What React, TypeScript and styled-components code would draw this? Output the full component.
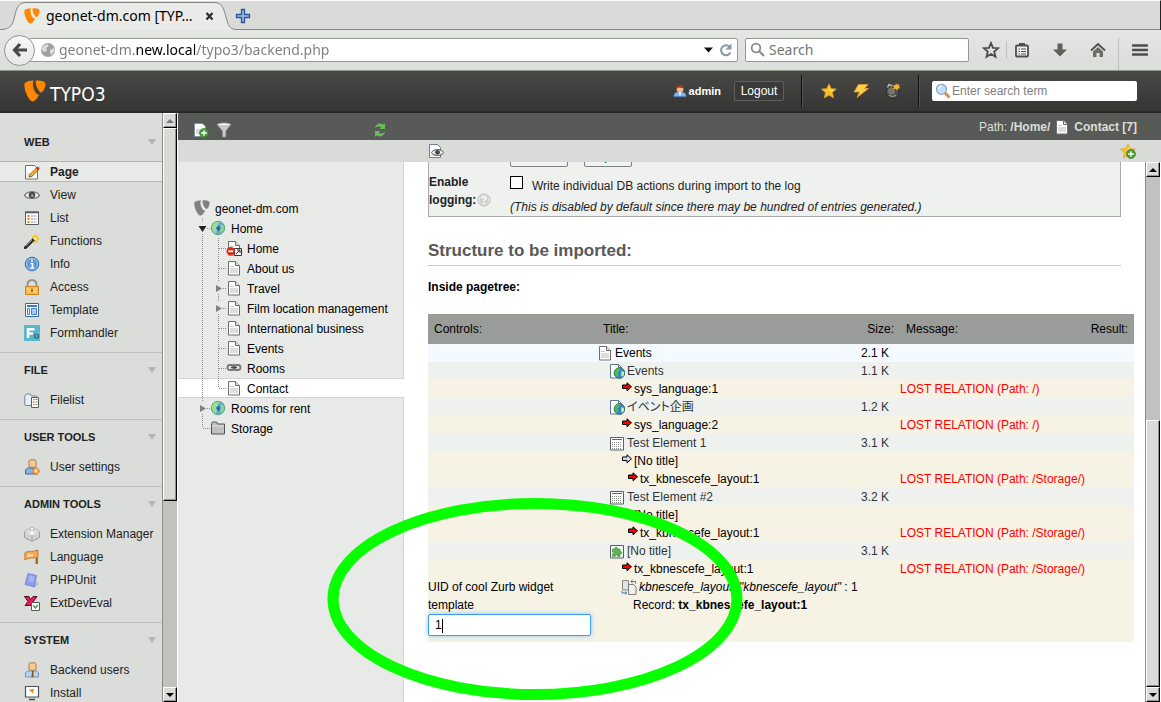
import React from "react";
import styled, { createGlobalStyle, css } from "styled-components";

const UI = `"Liberation Sans", Arial, "Noto Sans CJK JP", sans-serif`;
const CHROME = `"Noto Sans", "DejaVu Sans", sans-serif`;

const Global = createGlobalStyle`
  *, *::before, *::after { box-sizing: border-box; }
  body { margin: 0; font: 12px/18px ${UI}; color: #000; background: #fff; }
  ul { list-style: none; margin: 0; padding: 0; }
  h1, h2, h3, p { margin: 0; }
  a { color: inherit; text-decoration: none; }
  button, input { font-family: inherit; margin: 0; }
  button { padding: 0; border: 0; background: none; cursor: pointer; }
  svg { display: block; flex: none; }
`;

/* ---------- icons ---------- */

type Box = { size?: number; children: React.ReactNode };
const Svg = ({ size = 16, children }: Box) => (
  <svg width={size} height={size} viewBox="0 0 16 16" aria-hidden="true">{children}</svg>
);

const Shield = ({ color, size = 16 }: { color: string; size?: number }) => (
  <svg width={size} height={size} viewBox="0 0 22 22" aria-hidden="true">
    <path fill={color} d="M10 0.5C8.7 1.7 8.5 4 9.3 7.200c.9 3.700 3.400 7.300 5 7.300.4 0 .8-.1 1.200-.2-1.900 3.700-4.700 7.200-6.900 7.200C5.300 21.500.4 11.500.4 5.300c0-1.500.3-2.300.9-2.800C3.200 1.300 6.500.7 10 .5z" />
    <path fill={color} d="M12.500.4c4.600-.1 8.900.7 8.900 3.400 0 4.200-2.500 8.600-4.200 8.600-2.400 0-5.500-6.800-5.500-10.200 0-1.200.2-1.700.8-1.800z" />
  </svg>
);

const PageShape = () => (
  <>
    <path d="M2.500 1.500h7l4 4v9.500h-11z" fill="#fdfdfd" stroke="#6b6d6a" />
    <path d="M9.500 1.500v4h4" fill="#e4e6e3" stroke="#6b6d6a" />
    <path d="M4 8h8v5H4z" fill="#dcdedb" />
    <path d="M4 6.500h4" stroke="#c8cac7" />
  </>
);
const PlusBadge = () => (
  <>
    <circle cx="11" cy="11" r="4.500" fill="#4d9a3c" stroke="#2f7a2a" strokeWidth=".6" />
    <path d="M11 8.200v5.600M8.200 11h5.600" stroke="#fff" strokeWidth="1.400" />
  </>
);
const EyeShape = () => (
  <>
    <path d="M.5 8.500C3 3.500 13 3.500 15.500 8.500 13 12.500 3 12.500.5 8.500z" fill="#eceeeb" stroke="#6a6b69" strokeWidth="1.200" />
    <circle cx="8" cy="8" r="3.300" fill="#4a4b49" />
    <circle cx="8.300" cy="8.600" r="1.300" fill="#a5a6a4" />
  </>
);
const GlobeShape = () => (
  <>
    <circle cx="8" cy="8" r="6.700" fill="#62a8dc" stroke="#5aa873" />
    <path d="M2 6C3.500 2 7 1.500 10 2.200L8 4l.5 1.500L6 7l1 2.500-1 4C3 12.500 1.500 9.500 2 6z" fill="#9ade94" />
    <path d="M11 4l2.800 2v4.500l-2.800 2.500-1-3 1.500-2-1.500-2z" fill="#8ed88a" />
    <path d="M6 8l3.500-3 .5 4.500-1.500 2z" fill="#2d63b4" />
  </>
);
const BadgeGlobe = () => (
  <>
    <circle cx="10.500" cy="10" r="5.300" fill="#3f7fd0" stroke="#2f7f49" />
    <path d="M6 8c1-2 3-3 5-2.500l-1 2.500-1.500 1.500 1 2-1 2.500C6 13 5.500 10 6 8z" fill="#4cc04f" />
    <path d="M12.500 8l2.500 1v3l-2 2-1-2z" fill="#b8f0b0" />
  </>
);
const Star = () => (
  <>
    <path d="M8 .8l2.200 4.800 5.200.5-4 3.500 1.300 5.400L8 12.300 3.200 15l1.200-5.300-4-3.600 5.400-.5z" fill="#fac02c" stroke="#d99a1c" strokeWidth=".6" />
    <path d="M8 2.500l1.400 3.800 3.800.4-3.200 2L8 6z" fill="#ffdf5e" />
  </>
);
const Head = () => <rect x="5" y=".8" width="7" height="7.500" rx="1.500" fill="#f6cb94" stroke="#aa7a45" />;

const art: Record<string, React.ReactNode> = {
  page: <PageShape />,
  pageEdit: (
    <>
      <path d="M1.500 1.500h9l3 3v10.500h-12z" fill="#fdfdfd" stroke="#66708a" />
      <path d="M3 9h6v4H3z" fill="#dcdedb" />
      <path d="M5.200 13.200l1-3 6.500-6.500 2 2-6.500 6.500z" fill="#f5b82e" stroke="#6a4a16" strokeWidth=".8" />
      <path d="M12 4.400l2-1.900 1.700 1.800-1.800 2z" fill="#cf2b26" />
    </>
  ),
  eye: <EyeShape />,
  list: (
    <>
      <path d="M1.500 2h13v12.500h-13z" fill="#fff" stroke="#585a60" />
      <path d="M1 1.500h14v1.800H1z" fill="#585f72" />
      <path d="M3.500 5h2v2h-2zM3.500 8h2v2h-2zM3.500 11h2v2h-2z" fill="#f08220" />
      <path d="M7 6h6M7 9h6M7 12h6" stroke="#8d8f92" strokeDasharray="2 .7" />
    </>
  ),
  wand: (
    <>
      <path d="M11 0l1 3 3-1.500-1.400 3L16 6l-2.800 1 1.400 3L12 8.700 10.500 11 9.600 8 7 7.500 9 5.500 7.300 2.500 10 3.500z" fill="#f7c331" />
      <path d="M1.300 14.700l8-8" stroke="#2c2c2c" strokeWidth="3" strokeLinecap="round" />
      <path d="M2 13l6-6" stroke="#909090" />
      <circle cx="11" cy="5.500" r="1.600" fill="#fff0a0" />
    </>
  ),
  info: (
    <>
      <circle cx="8" cy="8" r="6.800" fill="#5f98d8" stroke="#3a6ca8" />
      <circle cx="8" cy="8" r="5.600" fill="none" stroke="#b5d3f0" strokeWidth=".8" />
      <path d="M8 3.600v1.900M6.500 7.500H8.500v4M6.400 11.700h3.800" stroke="#fff" strokeWidth="1.600" fill="none" />
    </>
  ),
  lock: (
    <>
      <path d="M3.500 8V5.500a4.500 4.500 0 0 1 9 0V8" fill="none" stroke="#8f918e" strokeWidth="2" />
      <path d="M1.500 7.500h13v8h-13z" fill="#f8b94f" stroke="#cf8320" />
      <path d="M3 10h10M3 12.500h10" stroke="#ffdc94" />
      <path d="M7.200 9.500h1.600v3.500H7.200z" fill="#9c5a10" />
    </>
  ),
  template: (
    <>
      <path d="M1.500 1.500h13v13h-13z" fill="#fff" stroke="#3468a8" />
      <path d="M3 3h10v2H3z" fill="#3f7bc4" />
      <path d="M3.500 6.500h2v6h-2z" fill="#fff" stroke="#4a80c0" />
      <path d="M7.500 6.500h5v6h-5z" fill="#a9caee" stroke="#4a80c0" />
    </>
  ),
  form: (
    <>
      <path d="M0 0h16v16H0z" fill="#5bb8cc" />
      <path d="M4 13V4.200h6.500M4 8.500h5" stroke="#fff" strokeWidth="2.400" fill="none" />
      <circle cx="12.500" cy="11" r="2" fill="none" stroke="#2b6674" strokeWidth="1.200" />
    </>
  ),
  filelist: (
    <>
      <path d="M.8 13V4l1.500-2h4l1.200 2h5v9.500h-11z" fill="#e6eef8" stroke="#7c838c" />
      <path d="M7.500 5.500h7v10h-7z" fill="#fff" stroke="#5d5f62" />
      <path d="M9 7.500h1.500M9 10h1.500M9 12.500h1.500" stroke="#f08220" strokeWidth="1.500" />
      <path d="M11.500 7.500h2M11.500 10h2M11.500 12.500h2" stroke="#5a9a5a" />
    </>
  ),
  userSettings: (
    <>
      <path d="M1.500 15V11l2-2h8l2 2v4z" fill="#8cb2e0" stroke="#3f6aa3" />
      <Head />
      <circle cx="12" cy="12" r="3" fill="#ffb650" stroke="#f07c13" strokeWidth="1.400" strokeDasharray="1.600 .8" />
      <circle cx="12" cy="12" r="1" fill="#fff" />
    </>
  ),
  brick: (
    <>
      <path d="M.5 5.500L8 2l7.500 3.500v6L8 15.300.5 11.500z" fill="#d2d4d2" stroke="#8f918e" strokeWidth=".8" />
      <path d="M.5 5.500L8 9l7.500-3.500L8 2z" fill="#f6f7f6" />
      <path d="M8 9v6" stroke="#a0a2a0" />
      <ellipse cx="8" cy="2.800" rx="2" ry="1.500" fill="#fff" stroke="#a8aaa7" strokeWidth=".8" />
      <ellipse cx="4.500" cy="5" rx="2" ry="1.300" fill="#fff" stroke="#a8aaa7" strokeWidth=".8" />
      <ellipse cx="11.500" cy="5" rx="2" ry="1.300" fill="#fff" stroke="#a8aaa7" strokeWidth=".8" />
    </>
  ),
  flag: (
    <>
      <path d="M11.500 1h2.500v14h-2.500z" fill="#a8682a" />
      <path d="M.8 4C4 .8 7 4 14 1v7.500C8.500 9.500 6 8 .8 11z" fill="#f6a650" stroke="#c97020" strokeWidth=".8" />
      <path d="M3 5.500c2-1 4 0 6-.5v2.500c-2 .5-4 0-6 1z" fill="#ffd29c" />
    </>
  ),
  unit: (
    <>
      <path d="M13 9l2 3-4 3z" fill="#b9bbba" />
      <path d="M4 1.500l8.500 2L10.500 15 1 12.500z" fill="#8d9bee" stroke="#7280d2" strokeWidth=".8" />
      <path d="M5.500 3.500l5 1.200-1.300 5.800-5-1.500z" fill="#a9b4f6" />
    </>
  ),
  devEval: (
    <>
      <path d="M.5 1.500h4.500l1.500 3L9 1.500h4L6.500 10.500H1l3-4z" fill="#e8195c" stroke="#3a0616" strokeWidth=".9" />
      <path d="M7.500 7.500h8v8h-8z" fill="#fff" stroke="#5b5d5a" />
      <path d="M9.300 10.500l2.200 2.500 2.300-3" fill="none" stroke="#3d9636" strokeWidth="1.400" />
    </>
  ),
  backendUser: (
    <>
      <path d="M1.500 15V11l2-2h9l2 2v4z" fill="#bdd2f0" stroke="#6f93c6" />
      <Head />
      <path d="M8 9h1.500v6H7.500z" fill="#8a5320" />
    </>
  ),
  install: (
    <>
      <path d="M1.500 1.500h13v10.500h-13z" fill="#fff" stroke="#4e5052" strokeWidth="1.200" />
      <path d="M5 14.500h6" stroke="#4e5052" strokeWidth="1.600" />
      <path d="M5 5l5-1.300L8.800 8.500 7.500 7z" fill="#f08220" />
    </>
  ),
  admin: (
    <>
      <path d="M1 14.500c0-4 2-5 4-5.500h6c2 .5 4 1.500 4 5.500z" fill="#86b4e8" stroke="#4275b3" strokeWidth=".8" />
      <circle cx="8" cy="5.500" r="4" fill="#f2b88a" />
      <path d="M3.500 6C3 1 6 .8 8.500.8S13 2 12.500 6L11 4.500 6 4z" fill="#8c3d16" />
      <path d="M6.500 9.500L8 14l1.500-4.500z" fill="#fff" />
    </>
  ),
  star: <Star />,
  starAdd: <><Star /><PlusBadge /></>,
  bolt: <path d="M5.500 1.500H15L11.500 5.500h4L4 14.500l2.500-5.500H1z" fill="#fcd04a" stroke="#e09a28" strokeWidth=".8" />,
  bomb: (
    <>
      <circle cx="7.500" cy="9" r="6.500" fill="#4d4f4d" stroke="#242524" strokeWidth=".8" />
      <circle cx="6.500" cy="8" r="3.500" fill="#747674" />
      <path d="M4 12a5 5 0 0 0 7 0" stroke="#8d8f8d" strokeWidth="1.200" fill="none" />
      <path d="M2.500 4.500L4 1.500 7.500 3" fill="none" stroke="#b5b7a5" strokeWidth="1.600" />
      <path d="M11 0l1 1.800 2.700-.5-.8 2.100 1.600 1.800-2.500.3-.8 2-1.600-1.700-2.500.4 1-2-1-2.200 2.300.2z" fill="#f7b52c" />
    </>
  ),
  lens: (
    <>
      <path d="M9.500 9.500l5 5" stroke="#d28d4e" strokeWidth="2.800" />
      <circle cx="6.500" cy="6.300" r="5" fill="#bfe0f8" stroke="#8ba7c6" strokeWidth="1.300" />
      <path d="M3.500 6a3 3 0 0 1 3-3" stroke="#fff" strokeWidth="1.200" fill="none" />
    </>
  ),
  newPage: <><path d="M1.500 1.500h8l3 3v10h-11z" fill="#fdfdfd" stroke="#8090a8" /><path d="M3 7h7v5H3z" fill="#d8dad7" /><PlusBadge /></>,
  filter: (
    <>
      <path d="M1 2.500h14L9.800 9v6H6.500V9z" fill="#c9cbc8" stroke="#8f918e" strokeWidth=".6" />
      <ellipse cx="8" cy="2.500" rx="6.500" ry="1.500" fill="#f5f6f5" stroke="#a5a7a4" strokeWidth=".6" />
    </>
  ),
  refresh: (
    <>
      <path d="M3 6C3.500 2.500 8 .2 11.500 2.500L13 1v6H7.500l1.800-1.800C7.500 4 5 4.500 3 6z" fill="#6cb85a" />
      <path d="M13 10c-.5 3.500-5 5.800-8.500 3.500L3 15V9h5.500l-1.800 1.800c1.800 1.200 4.300.7 6.300-.8z" fill="#6cb85a" />
    </>
  ),
  viewPage: (
    <>
      <path d="M1.500 1.500h8l3 3v10h-11z" fill="#fdfdfd" stroke="#6f7f99" />
      <path d="M3 11h7v2H3z" fill="#d8dad7" />
      <path d="M3.500 9.500c2-4 10-4 12 0-2 4-10 4-12 0z" fill="#e9ebe8" stroke="#555754" />
      <circle cx="9.500" cy="9.300" r="2.400" fill="#454644" />
    </>
  ),
  globe: <GlobeShape />,
  shortcut: (
    <>
      <PageShape />
      <path d="M8.500 8.500h7v7h-7z" fill="#fff" stroke="#333" />
      <path d="M10 14l3.800-3.800M11 10h3v3" stroke="#222" fill="none" />
      <circle cx="4.700" cy="11.300" r="4.200" fill="#e02b14" />
      <path d="M2.300 11.300h4.800" stroke="#fff" strokeWidth="1.800" />
    </>
  ),
  chain: (
    <>
      <rect x="1.500" y="5" width="7" height="5" rx="2.500" fill="none" stroke="#777977" strokeWidth="1.800" />
      <rect x="7.500" y="5" width="7" height="5" rx="2.500" fill="none" stroke="#777977" strokeWidth="1.800" />
      <path d="M5 7.500h6" stroke="#444" strokeWidth="1.600" />
    </>
  ),
  folder: (
    <>
      <path d="M1.500 14V3.500l1-1.500h4l1 2h7v10z" fill="#c0c2bf" stroke="#50524f" />
      <path d="M2 6h12" stroke="#e0e2df" />
    </>
  ),
  pageGlobe: <><path d="M1.500 1.500h8l3 3v10.500h-11z" fill="#fdfdfd" stroke="#66788f" /><path d="M9.500 1.500v3h3" fill="none" stroke="#66788f" /><BadgeGlobe /></>,
  grid: (
    <>
      <path d="M1.500 2.500h13v12.500h-13z" fill="#fff" stroke="#5d5f5c" />
      <path d="M3 4.500h10" stroke="#666" />
      <path d="M3 7.500h10M3 9.500h10M3 11.500h10M3 13.500h10" stroke="#8a8c89" strokeDasharray="1 1" />
    </>
  ),
  plugin: (
    <>
      <path d="M1.500 2.500h13v12.500h-13z" fill="#f4faf3" stroke="#5d5f5c" />
      <path d="M3.500 6H6c-.8-2.500 3-2.500 2.200 0H11v2.500c2.500-.8 2.500 3 0 2.200V13.500H8.500c.6-2-2.800-2-2.200 0H3.500V10.800c1.600.5 1.600-2.600 0-2z" fill="#5cb553" stroke="#3a8a35" strokeWidth=".6" />
    </>
  ),
  softref: (
    <>
      <path d="M1.500 1.500h6v9.500h-6z" fill="#e1e3e0" stroke="#858784" />
      <path d="M7.500 5.500h5l2.500 2.500v7.500H7.500z" fill="#f0f1ef" stroke="#7c7e7b" />
      <path d="M10 2.500h4.500v2M11.500 1l-1.700 1.500L11.500 4M5.500 14H1v-2M4 12.500L5.700 14 4 15.500" fill="none" stroke="#3d76b8" />
    </>
  ),
  help: (
    <>
      <circle cx="8" cy="8" r="6" fill="#cfd1ce" stroke="#b4b6b3" />
      <circle cx="8" cy="8" r="5" fill="none" stroke="#eceeec" />
      <path d="M6 6.700C6 4.300 10 4.500 9.800 6.700c-.1 1.200-1.800 1.300-1.800 2.600M8 10.500V12" stroke="#fff" strokeWidth="1.500" fill="none" />
    </>
  ),
};
const Icon = ({ name, size }: { name: string; size?: number }) => <Svg size={size}>{art[name]}</Svg>;

const Arrow = ({ fill }: { fill: string }) => (
  <svg width="11" height="10" viewBox="0 0 11 10" aria-hidden="true">
    <path d="M1.500 3H6V.8L10.500 4.800 6 8.800V6.500H1.500z" fill={fill} stroke="#000" />
  </svg>
);

/* ---------- browser chrome ---------- */

const Page = styled.div`
  display: flex;
  flex-direction: column;
  height: 100vh;
  overflow: hidden;
`;
const TabStrip = styled.div`
  display: flex;
  align-items: center;
  height: 30px;
  background: #d9dbd8;
  border-top: 1px solid #fcfdfc;
  border-right: 1px solid #222;
  box-shadow: inset 0 -1px #84867f;
  font: 14px/20px ${CHROME};
`;
const Tab = styled.div`
  position: relative;
  display: flex;
  align-items: center;
  width: 235px;
  height: 29px;
  padding: 0 17px 0 24px;
  gap: 6px;
`;
const TabShape = styled.svg`
  position: absolute;
  inset: 0;
`;
const TabTitle = styled.span`
  position: relative;
  flex: 1;
  white-space: nowrap;
`;
const TabIcon = styled.span`
  position: relative;
`;
const TabButton = styled.button`
  position: relative;
  width: 16px;
  height: 16px;
`;
const Toolbar = styled.div`
  display: flex;
  align-items: center;
  height: 41px;
  padding: 0 9px 0 4px;
  background: linear-gradient(#e4e6e3, #dbddda);
  border-bottom: 1px solid #93958a;
`;
const Back = styled.button`
  z-index: 1;
  display: grid;
  place-items: center;
  width: 31px;
  height: 31px;
  border: 1px solid #8d9690;
  border-radius: 50%;
  background: linear-gradient(#f7f8f7, #e6e8e5);
`;
const Field = styled.label<{ $search?: boolean }>`
  display: flex;
  align-items: center;
  height: 24px;
  background: #fff;
  border: 1px solid #96988f;
  border-radius: 2px;
  ${(p) => p.$search
    ? css`width: 224px; margin-left: 7px; padding-left: 4px; gap: 3px;`
    : css`flex: 1; margin-left: -6px; padding: 0 3px 0 10px; gap: 3px;`}
`;
const FieldInput = styled.input<{ $url?: boolean }>`
  flex: 1;
  min-width: 0;
  padding: 0;
  border: 0;
  outline: 0;
  background: transparent;
  font: 14px/20px ${CHROME};
  color: #777;
  &::placeholder { color: #757575; opacity: 1; }
  ${(p) => p.$url && css`
    color: transparent;
    background: linear-gradient(90deg, #7c7c7c 76px, #000 76px, #000 136px, #7c7c7c 136px);
    background-clip: text;
    -webkit-background-clip: text;
  `}
`;
const ToolIcons = styled.div`
  display: flex;
  align-items: center;
  margin-left: 13px;
`;
const ToolButton = styled.button<{ $w: number }>`
  display: grid;
  place-items: center;
  width: ${(p) => p.$w}px;
  height: 24px;
`;
const ToolRule = styled.span<{ $tall?: boolean }>`
  width: 1px;
  height: ${(p) => (p.$tall ? 32 : 18)}px;
  background: #bdbfba;
`;

/* ---------- application header ---------- */

const TopBar = styled.header`
  display: flex;
  align-items: center;
  height: 42px;
  padding: 0 24px;
  background: linear-gradient(#484946, #353633);
  border-bottom: 2px solid #282927;
  color: #fff;
`;
const Logo = styled.a`
  display: flex;
  align-items: center;
  gap: 4px;
  margin-right: auto;
  font: 19px/24px "DejaVu Sans Condensed", "DejaVu Sans", sans-serif;
  font-stretch: condensed;
`;
const LogoText = styled.span`
  padding-top: 6px;
`;
const User = styled.span`
  display: flex;
  align-items: center;
  gap: 2px;
  margin-right: 13px;
  font-size: 11px;
  font-weight: bold;
`;
const Logout = styled.button`
  width: 50px;
  height: 20px;
  border: 1px solid #5e605c;
  border-radius: 2px;
  background: #3a3b38;
  color: #fff;
  font-size: 12px;
`;
const TopRule = styled.span`
  width: 2px;
  height: 32px;
  margin: 0 12px 0 17px;
  background: #111;
  border-right: 1px solid #50524e;
`;
const TopTools = styled.div`
  display: flex;
  gap: 16px;
  padding-left: 6px;
`;
const TopSearch = styled.label`
  display: flex;
  align-items: center;
  width: 205px;
  height: 20px;
  padding: 0 3px;
  gap: 1px;
  border-radius: 2px;
  background: #fff;
`;
const TopSearchInput = styled.input`
  flex: 1;
  min-width: 0;
  padding: 0;
  border: 0;
  outline: 0;
  background: transparent;
  font: 12px/18px ${UI};
  &::placeholder { color: #808080; opacity: 1; }
`;

/* ---------- module menu ---------- */

const Main = styled.div`
  display: flex;
  flex: 1;
  min-height: 0;
`;
const Menu = styled.nav`
  flex: none;
  width: 162px;
  padding-top: 11px;
  overflow: hidden;
  background: #dbdddb;
  color: #222;
`;
const Group = styled.section`
  padding-bottom: 8px;
  & + & { box-shadow: inset 0 1px #c0c2c0; }
`;
const GroupTitle = styled.h2`
  display: flex;
  align-items: center;
  justify-content: space-between;
  height: 36px;
  padding: 0 6px 0 24px;
  font-size: 11px;
`;
const Triangle = styled.span`
  border: 4px solid transparent;
  border-width: 6px 4px 0;
  border-top-color: #b3b5b3;
`;
const ModuleLink = styled.a<{ $active?: boolean }>`
  display: flex;
  align-items: center;
  height: 23px;
  padding-left: 24px;
  gap: 10px;
  white-space: nowrap;
  ${(p) => p.$active && css`
    height: 21px;
    margin: 1px 0;
    background: #e8eae8;
    box-shadow: inset 0 1px #b4b6b4, inset 0 -1px #b4b6b4;
    font-weight: bold;
  `}
`;

/* ---------- scroll bars ---------- */

const Bar = styled.div`
  display: flex;
  flex: none;
  flex-direction: column;
  width: 16px;
  background: #c0c2bf;
  border-left: 1px solid #8b8d85;
  border-right: 1px solid #fff;
`;
const bevel = css`
  background: #d9dbd8;
  border: 1px solid;
  border-color: #fff #000 #000 #fff;
  box-shadow: inset -1px -1px #90928d;
`;
const BarButton = styled.button`
  ${bevel}
  display: grid;
  place-items: center;
  height: 15px;
`;
const BarThumb = styled.div<{ $grow: number }>`
  ${bevel}
  flex: ${(p) => p.$grow} 0 0;
`;
const BarGap = styled.div<{ $grow: number }>`
  flex: ${(p) => p.$grow} 0 0;
`;
const ScrollBar = ({ before, thumb, after, muted }: { before: number; thumb: number; after: number; muted?: boolean }) => (
  <Bar>
    <BarButton aria-label="Scroll up">
      <svg width="8" height="4" viewBox="0 0 8 4"><path d="M4 0l4 4H0z" fill={muted ? "#777975" : "#000"} /></svg>
    </BarButton>
    <BarGap $grow={before} />
    <BarThumb $grow={thumb} />
    <BarGap $grow={after} />
    <BarButton aria-label="Scroll down">
      <svg width="8" height="4" viewBox="0 0 8 4"><path d="M0 0h8L4 4z" /></svg>
    </BarButton>
  </Bar>
);

/* ---------- workspace ---------- */

const Workspace = styled.div`
  display: flex;
  flex: 1;
  flex-direction: column;
  min-width: 0;
`;
const DocHeader = styled.div`
  display: flex;
  align-items: center;
  justify-content: space-between;
  height: 27px;
  padding: 0 24px 0 15px;
  background: #585a57;
  color: #dcdedb;
`;
const TreeTools = styled.div`
  display: flex;
  gap: 7px;
  width: 195px;
  padding-top: 6px;
`;
const Push = styled.button`
  margin-left: auto;
`;
const Path = styled.div`
  display: flex;
  align-items: center;
  gap: 4px;
  white-space: nowrap;
`;
const DocButtons = styled.div`
  display: flex;
  align-items: center;
  justify-content: space-between;
  height: 22px;
  padding: 0 25px 0 250px;
  background: #d9dbd8;
`;
const Panes = styled.div`
  display: flex;
  flex: 1;
  min-height: 0;
`;
const Tree = styled.aside`
  flex: none;
  width: 226px;
  padding-top: 36px;
  overflow: hidden;
  background: #e8eae8;
  box-shadow: inset -1px 0 #d2d4d2;
`;
const TreeRow = styled.li<{ $active?: boolean }>`
  display: flex;
  align-items: center;
  height: 20px;
  padding-left: 16px;
  white-space: nowrap;
  ${(p) => p.$active && css`
    background: #fff;
    box-shadow: inset 0 1px #d2d4d2, inset 0 -1px #d2d4d2;
  `}
`;
const TreeLink = styled.a`
  display: flex;
  align-items: center;
  gap: 5px;
  height: 20px;
`;
const TreeText = styled.span`
  padding-top: 2px;
`;

type GuideKind = "line" | "tee" | "end" | "open" | "closed";
const Guide = ({ kind }: { kind: GuideKind }) => {
  const node = kind === "open" || kind === "closed";
  return (
    <svg width="16" height="20" viewBox="0 0 16 20" aria-hidden="true">
      <g stroke="#8c8e8b" strokeDasharray="1 1">
        {(kind === "line" || kind === "tee") && <path d="M8.500 0v20" />}
        {kind === "end" && <path d="M8.500 0v10" />}
        {node && <path d="M8.500 0v4M8.500 16v4" />}
        {(kind === "tee" || kind === "end") && <path d="M9 10.500h7" />}
        {node && <path d="M13 10.500h3" />}
      </g>
      {kind === "open" && <path d="M4.500 8h8l-4 6z" fill="#222" />}
      {kind === "closed" && <path d="M6 7v7l6-3.500z" fill="#7f817e" />}
    </svg>
  );
};

const Content = styled.main`
  flex: 1;
  min-width: 0;
  padding-left: 24px;
  overflow: hidden;
  background: #fff;
`;
const Options = styled.form`
  margin: -18px 24px 0 0;
  background: #eff1ef;
  border: 1px solid #a9aba8;
  color: #222;
`;
const ButtonRow = styled.div`
  display: flex;
  gap: 16px;
  padding-left: 81px;
`;
const FormButton = styled.button<{ $w: number }>`
  width: ${(p) => p.$w}px;
  height: 22px;
  border: 1px solid #7d7f7c;
  border-radius: 2px;
  background: #f2f3f1;
  font-size: 12px;
`;
const OptionRow = styled.div`
  display: flex;
  height: 49px;
  padding-top: 6px;
`;
const OptionName = styled.div`
  width: 81px;
  font-weight: bold;
`;
const HelpLine = styled.span`
  display: flex;
  align-items: center;
`;
const OptionText = styled.div`
  flex: 1;
`;
const CheckLine = styled.label`
  display: flex;
  align-items: center;
  gap: 9px;
  height: 25px;
`;
const Check = styled.input`
  appearance: none;
  width: 13px;
  height: 13px;
  margin: 0 0 6px;
  background: #fff;
  border: 1px solid #000;
`;
const Title = styled.h1`
  margin: 24px 24px 12px 0;
  padding-bottom: 4px;
  border-bottom: 1px solid #c8cac8;
  color: #585858;
  font-size: 17px;
  line-height: 20px;
`;
const Subtitle = styled.h3`
  margin-bottom: 18px;
  font-size: 12px;
  line-height: 18px;
`;
const TableWrap = styled.div`
  padding-right: 11px;
`;
const Table = styled.table`
  width: 100%;
  table-layout: fixed;
  border-collapse: collapse;
`;
const Th = styled.th<{ $w?: number; $right?: boolean }>`
  width: ${(p) => (p.$w ? `${p.$w}px` : "auto")};
  height: 30px;
  padding: 0 6px;
  background: #9a9c99;
  font-weight: normal;
  text-align: ${(p) => (p.$right ? "right" : "left")};
`;
const tones = { page: "#f4faff", record: "#eff1ef", relation: "#f6f2e4" };
type Tone = keyof typeof tones;
const Tr = styled.tr<{ $tone: Tone }>`
  height: 18px;
  background: ${(p) => tones[p.$tone]};
  color: ${(p) => (p.$tone === "record" ? "#333" : "#000")};
`;
const Td = styled.td<{ $size?: boolean; $error?: boolean }>`
  padding: 0;
  vertical-align: top;
  white-space: nowrap;
  ${(p) => p.$size && css`padding-right: 11px; text-align: right;`}
  ${(p) => p.$error && css`color: #f00;`}
`;
const Entry = styled.div<{ $indent: number }>`
  display: flex;
  height: 18px;
  gap: 2px;
  padding-left: ${(p) => p.$indent}px;
  font-feature-settings: "palt";
`;
const IconSlot = styled.span<{ $arrow?: boolean }>`
  padding-top: ${(p) => (p.$arrow ? 2 : 1)}px;
`;
const WidgetCell = styled.td`
  height: 64px;
  padding: 0 6px 0 0;
  vertical-align: top;
`;
const WidgetLabel = styled.label`
  display: block;
  width: 150px;
`;
const WidgetInput = styled.input`
  display: block;
  width: 163px;
  height: 22px;
  padding: 0 6px;
  border: 1px solid #3a9df5;
  border-radius: 2px;
  outline: 0;
  background: linear-gradient(#000, #000) 13px 4px / 1px 14px no-repeat #fff;
  box-shadow: 0 0 5px #8ec8f4;
  font: 12px/18px ${UI};
`;
const Stage = styled.div`
  position: relative;
  display: flex;
  flex: 1;
  min-width: 0;
`;
const Marker = styled.svg`
  position: absolute;
  left: 149px;
  top: 336px;
  pointer-events: none;
`;

/* ---------- data ---------- */

const groups: { title: string; items: [string, string][] }[] = [
  { title: "WEB", items: [["pageEdit", "Page"], ["eye", "View"], ["list", "List"], ["wand", "Functions"], ["info", "Info"], ["lock", "Access"], ["template", "Template"], ["form", "Formhandler"]] },
  { title: "FILE", items: [["filelist", "Filelist"]] },
  { title: "USER TOOLS", items: [["userSettings", "User settings"]] },
  { title: "ADMIN TOOLS", items: [["brick", "Extension Manager"], ["flag", "Language"], ["unit", "PHPUnit"], ["devEval", "ExtDevEval"]] },
  { title: "SYSTEM", items: [["backendUser", "Backend users"], ["install", "Install"]] },
];

const tree: { guides: GuideKind[]; icon: string; text: string }[] = [
  { guides: ["open"], icon: "globe", text: "Home" },
  { guides: ["line", "tee"], icon: "shortcut", text: "Home" },
  { guides: ["line", "tee"], icon: "page", text: "About us" },
  { guides: ["line", "closed"], icon: "page", text: "Travel" },
  { guides: ["line", "closed"], icon: "page", text: "Film location management" },
  { guides: ["line", "tee"], icon: "page", text: "International business" },
  { guides: ["line", "tee"], icon: "page", text: "Events" },
  { guides: ["line", "tee"], icon: "chain", text: "Rooms" },
  { guides: ["line", "end"], icon: "page", text: "Contact" },
  { guides: ["closed"], icon: "globe", text: "Rooms for rent" },
  { guides: ["end"], icon: "folder", text: "Storage" },
];

type Row = { tone: Tone; indent: number; icon: string; text: string; size?: string; msg?: string };
const rows: Row[] = [
  { tone: "page", indent: 0, icon: "page", text: "Events", size: "2.1 K" },
  { tone: "record", indent: 12, icon: "pageGlobe", text: "Events", size: "1.1 K" },
  { tone: "relation", indent: 24, icon: "red", text: "sys_language:1", msg: "LOST RELATION (Path: /)" },
  { tone: "record", indent: 12, icon: "pageGlobe", text: "イベント企画", size: "1.2 K" },
  { tone: "relation", indent: 24, icon: "red", text: "sys_language:2", msg: "LOST RELATION (Path: /)" },
  { tone: "record", indent: 12, icon: "grid", text: "Test Element 1", size: "3.1 K" },
  { tone: "relation", indent: 24, icon: "blue", text: "[No title]" },
  { tone: "relation", indent: 30, icon: "red", text: "tx_kbnescefe_layout:1", msg: "LOST RELATION (Path: /Storage/)" },
  { tone: "record", indent: 12, icon: "grid", text: "Test Element #2", size: "3.2 K" },
  { tone: "relation", indent: 24, icon: "blue", text: "[No title]" },
  { tone: "relation", indent: 30, icon: "red", text: "tx_kbnescefe_layout:1", msg: "LOST RELATION (Path: /Storage/)" },
  { tone: "record", indent: 12, icon: "plugin", text: "[No title]", size: "3.1 K" },
  { tone: "relation", indent: 24, icon: "red", text: "tx_kbnescefe_layout:1", msg: "LOST RELATION (Path: /Storage/)" },
];
const arrowFill: Record<string, string> = { red: "#f40000", blue: "#d5d5f8" };

/* ---------- page ---------- */

const BrowserChrome = () => (
  <>
    <TabStrip>
      <Tab>
        <TabShape width="240" height="29" viewBox="0 0 240 29" aria-hidden="true">
          <path d="M0 28.500C8 28.500 12 26 14 18S17 1.500 26 1.500H214C223 1.500 224 9 226.500 18S231 28.500 238 28.500V29H0z" fill="#e9ebe9" />
          <path d="M0 28.500C8 28.500 12 26 14 18S17 1.500 26 1.500H214C223 1.500 224 9 226.500 18S231 28.500 238 28.500" fill="none" stroke="#84867f" />
        </TabShape>
        <TabIcon><Shield color="#ff8700" /></TabIcon>
        <TabTitle>geonet-dm.com [TYP…</TabTitle>
        <TabButton aria-label="Close tab">
          <svg width="16" height="16" viewBox="0 0 16 16"><path d="M4.500 5l6 6.500M10.500 5l-6 6.500" stroke="#2e2f2d" strokeWidth="2.300" /></svg>
        </TabButton>
      </Tab>
      <TabButton aria-label="New tab">
        <svg width="16" height="16" viewBox="0 0 16 16"><path d="M6.500 1.500h3v5h5v3h-5v5h-3v-5h-5v-3h5z" fill="#9cbbe4" stroke="#2c549a" strokeWidth="1.300" /></svg>
      </TabButton>
    </TabStrip>
    <Toolbar>
      <Back aria-label="Back">
        <svg width="16" height="16" viewBox="0 0 16 16"><path d="M8 2L2.500 8 8 14M3 8h12" fill="none" stroke="#484a47" strokeWidth="3.200" /></svg>
      </Back>
      <Field>
        <Svg>
          <circle cx="8" cy="8" r="7" fill="#9fa19e" />
          <path d="M3 4l4-2 2 2-3 2 1 3-3 1-2.500-3zM10 8l4-2 .5 3-3 4-1.500-2z" fill="#dcdedb" />
        </Svg>
        <FieldInput $url aria-label="Address" defaultValue="geonet-dm.new.local/typo3/backend.php" />
        <Svg><path d="M5 5.500h9l-4.500 5z" fill="#111" /></Svg>
        <Svg>
          <path d="M12.500 10.500A5 5 0 1 1 11.500 4.500" fill="none" stroke="#8a98a2" strokeWidth="2" />
          <path d="M13.500 1.500v6H7.500z" fill="#8a98a2" />
        </Svg>
      </Field>
      <Field $search>
        <Svg>
          <circle cx="6" cy="6" r="4.300" fill="none" stroke="#8b8d8a" strokeWidth="1.800" />
          <path d="M9 9l5 5" stroke="#8b8d8a" strokeWidth="2.200" />
        </Svg>
        <FieldInput aria-label="Search" placeholder="Search" />
      </Field>
      <ToolIcons>
        <ToolButton $w={18} aria-label="Bookmark">
          <svg width="18" height="18" viewBox="0 0 18 18"><path d="M9 2l2 4.800 5.200.4-4 3.400 1.300 5.200L9 13l-4.500 2.800 1.300-5.200-4-3.400L7 6.800z" fill="none" stroke="#4c4e4b" strokeWidth="1.800" /></svg>
        </ToolButton>
        <ToolButton $w={12} as="span"><ToolRule /></ToolButton>
        <ToolButton $w={20} aria-label="Bookmarks list">
          <Svg>
            <rect x="2" y="3.500" width="12" height="11" rx="1" fill="#f0f1ef" stroke="#4c4e4b" strokeWidth="1.800" />
            <path d="M5 1h6v3H5z" fill="#4c4e4b" />
            <path d="M4.500 7H6M7 7h5M4.500 9.500H6M7 9.500h5M4.500 12H6M7 12h5" stroke="#4c4e4b" />
          </Svg>
        </ToolButton>
        <ToolButton $w={56} aria-label="Downloads">
          <Svg><path d="M5.500 1.500h5v6H15l-7 7-7-7h4.500z" fill="#5d5f59" /></Svg>
        </ToolButton>
        <ToolButton $w={20} aria-label="Home">
          <Svg>
            <path d="M1 8.500l7-6.500 7 6.500" fill="none" stroke="#4c4e4b" strokeWidth="1.800" />
            <path d="M3 9.500l5-4.500 5 4.500v5.500H9.500v-4h-3v4H3z" fill="#6b6d67" />
          </Svg>
        </ToolButton>
        <ToolButton $w={20} as="span"><ToolRule $tall /></ToolButton>
        <ToolButton $w={24} aria-label="Open menu">
          <Svg><path d="M1 3.500h14M1 8h14M1 12.500h14" stroke="#4c4e4b" strokeWidth="2.600" strokeLinecap="round" /></Svg>
        </ToolButton>
      </ToolIcons>
    </Toolbar>
  </>
);

const Header = () => (
  <TopBar>
    <Logo href="#"><Shield color="#ff8700" size={22} /><LogoText>TYPO3</LogoText></Logo>
    <User><Icon name="admin" size={14} />admin</User>
    <Logout>Logout</Logout>
    <TopRule />
    <TopTools>
      <button aria-label="Shortcuts"><Icon name="star" /></button>
      <button aria-label="Clear cache"><Icon name="bolt" /></button>
      <button aria-label="Open documents"><Icon name="bomb" /></button>
    </TopTools>
    <TopRule />
    <TopSearch>
      <Icon name="lens" />
      <TopSearchInput aria-label="Enter search term" placeholder="Enter search term" />
    </TopSearch>
  </TopBar>
);

const RecordTable = () => (
  <TableWrap>
    <Table>
      <thead>
        <tr>
          <Th $w={169}>Controls:</Th>
          <Th>Title:</Th>
          <Th $w={60} $right>Size:</Th>
          <Th $w={174}>Message:</Th>
          <Th $w={60} $right>Result:</Th>
        </tr>
      </thead>
      <tbody>
        {rows.map((r, i) => (
          <Tr key={i} $tone={r.tone}>
            <Td />
            <Td>
              <Entry $indent={r.indent}>
                <IconSlot $arrow={r.icon in arrowFill}>
                  {r.icon in arrowFill ? <Arrow fill={arrowFill[r.icon]} /> : <Icon name={r.icon} />}
                </IconSlot>
                {r.text}
              </Entry>
            </Td>
            <Td $size>{r.size}</Td>
            <Td $error colSpan={2}>{r.msg}</Td>
          </Tr>
        ))}
        <Tr $tone="relation">
          <WidgetCell>
            <WidgetLabel htmlFor="widget-uid">UID of cool Zurb widget template</WidgetLabel>
            <WidgetInput id="widget-uid" defaultValue="1" />
          </WidgetCell>
          <Td>
            <Entry $indent={24}>
              <IconSlot><Icon name="softref" /></IconSlot>
              <span><em>kbnescefe_layout, "kbnescefe_layout"</em> : 1</span>
            </Entry>
            <Entry $indent={36}><span>Record: <b>tx_kbnescefe_layout:1</b></span></Entry>
          </Td>
          <Td />
          <Td colSpan={2} />
        </Tr>
      </tbody>
    </Table>
  </TableWrap>
);

export default function App() {
  return (
    <Page>
      <Global />
      <BrowserChrome />
      <Header />
      <Main>
        <Menu>
          {groups.map((g) => (
            <Group key={g.title}>
              <GroupTitle>{g.title}<Triangle /></GroupTitle>
              <ul>
                {g.items.map(([icon, text]) => (
                  <li key={text}><ModuleLink href="#" $active={text === "Page"}><Icon name={icon} />{text}</ModuleLink></li>
                ))}
              </ul>
            </Group>
          ))}
        </Menu>
        <ScrollBar before={0} thumb={372} after={187} muted />
        <Workspace>
          <DocHeader>
            <TreeTools>
              <button aria-label="New page"><Icon name="newPage" /></button>
              <button aria-label="Filter"><Icon name="filter" /></button>
              <Push aria-label="Refresh"><Icon name="refresh" /></Push>
            </TreeTools>
            <Path><span>Path: <b>/Home/</b></span><Icon name="page" /><b>Contact [7]</b></Path>
          </DocHeader>
          <DocButtons>
            <button aria-label="View page"><Icon name="viewPage" /></button>
            <button aria-label="Add shortcut"><Icon name="starAdd" /></button>
          </DocButtons>
          <Panes>
            <Stage>
              <Tree>
                <ul>
                  <TreeRow><TreeLink href="#"><Shield color="#7f817e" /><TreeText>geonet-dm.com</TreeText></TreeLink></TreeRow>
                  {tree.map((n, i) => (
                    <TreeRow key={i} $active={n.text === "Contact"}>
                      {n.guides.map((k, j) => <Guide key={j} kind={k} />)}
                      <TreeLink href="#"><Icon name={n.icon} /><TreeText>{n.text}</TreeText></TreeLink>
                    </TreeRow>
                  ))}
                </ul>
              </Tree>
              <Content>
                <Options>
                  <ButtonRow>
                    <FormButton type="button" $w={58}>Preview</FormButton>
                    <FormButton type="button" $w={48}>Import</FormButton>
                  </ButtonRow>
                  <OptionRow>
                    <OptionName>Enable<HelpLine>logging:<Icon name="help" /></HelpLine></OptionName>
                    <OptionText>
                      <CheckLine><Check type="checkbox" />Write individual DB actions during import to the log</CheckLine>
                      <em>(This is disabled by default since there may be hundred of entries generated.)</em>
                    </OptionText>
                  </OptionRow>
                </Options>
                <Title>Structure to be imported:</Title>
                <Subtitle>Inside pagetree:</Subtitle>
                <RecordTable />
              </Content>
              <Marker width="416" height="204" viewBox="0 0 416 204" aria-hidden="true">
                <ellipse cx="208" cy="101" rx="202" ry="95.500" fill="none" stroke="#08ff00" strokeWidth="11" />
              </Marker>
            </Stage>
            <ScrollBar before={243} thumb={266} after={0} />
          </Panes>
        </Workspace>
      </Main>
    </Page>
  );
}
